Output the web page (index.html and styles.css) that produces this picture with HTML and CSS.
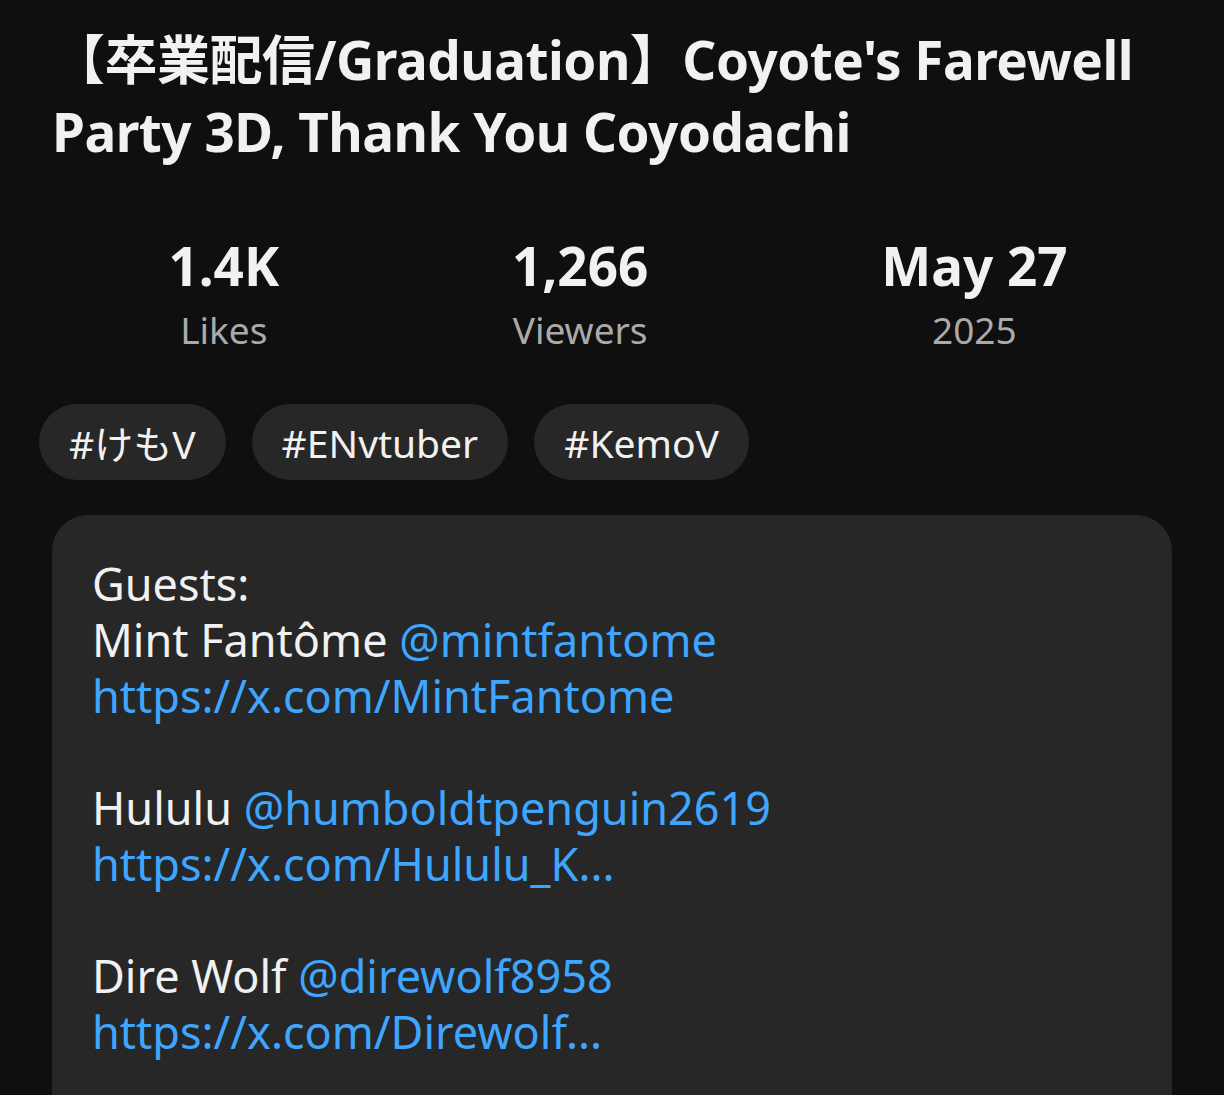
FILE: index.html
```html
<!DOCTYPE html>
<html lang="en">
<head>
  <meta charset="UTF-8" />
  <meta name="viewport" content="width=device-width, initial-scale=1.0"/>
  <title>Description</title>
  <link rel="stylesheet" href="styles.css">
</head>
<body>
  <div class="panel">
    <h1 class="title">【卒業配信/Graduation】Coyote's Farewell Party 3D, Thank You Coyodachi</h1>

    <div class="stats">
      <div class="stat">
        <div class="stat-value">1.4K</div>
        <div class="stat-label">Likes</div>
      </div>
      <div class="stat">
        <div class="stat-value">1,266</div>
        <div class="stat-label">Viewers</div>
      </div>
      <div class="stat">
        <div class="stat-value">May 27</div>
        <div class="stat-label">2025</div>
      </div>
    </div>

    <div class="tags">
      <span class="tag">#けもV</span>
      <span class="tag">#ENvtuber</span>
      <span class="tag">#KemoV</span>
    </div>

    <div class="desc">
      <p>Guests:<br>
        Mint Fantôme <a href="#">@mintfantome</a><br>
        <a href="#">https://x.com/MintFantome</a></p>
      <p>Hululu <a href="#">@humboldtpenguin2619</a><br>
        <a href="#">https://x.com/Hululu_K...</a></p>
      <p>Dire Wolf <a href="#">@direwolf8958</a><br>
        <a href="#">https://x.com/Direwolf...</a></p>
    </div>
  </div>
</body>
</html>
```

FILE: styles.css
```css
html, body {
  margin: 0;
  padding: 0;
  background: #0f0f0f;
  color: #f1f1f1;
  height: 100%;
  overflow: hidden;
  font-family: "Noto Sans", "Noto Sans CJK JP", sans-serif;
}

.panel {
  padding: 24px 52px 0 52px;
}

.title {
  margin: 0;
  font-weight: 700;
  font-size: 53px;
  line-height: 72px;
  letter-spacing: -0.5px;
  color: #f1f1f1;
}

.stats {
  display: flex;
  margin: 66px -12px 0 0;
}

.stat {
  flex: 1 1 auto;
  text-align: center;
}

.stat-value {
  font-weight: 700;
  font-size: 53px;
  line-height: 64px;
}

.stat-label {
  margin-top: 6px;
  font-size: 37px;
  line-height: 52px;
  color: #aaaaaa;
}

.tags {
  display: flex;
  gap: 26px;
  margin: 48px 0 0 -13px;
}

.tag {
  background: #272727;
  border-radius: 38px;
  height: 76px;
  padding: 0 30px;
  display: flex;
  align-items: center;
  font-size: 39px;
  color: #f1f1f1;
}

.desc {
  margin-top: 35px;
  background: #272727;
  border-radius: 36px;
  padding: 41px 40px 60px 40px;
  font-size: 45px;
  line-height: 56px;
}

.desc p {
  margin: 0 0 56px 0;
}

.desc a {
  color: #3ea6ff;
  text-decoration: none;
}
```
